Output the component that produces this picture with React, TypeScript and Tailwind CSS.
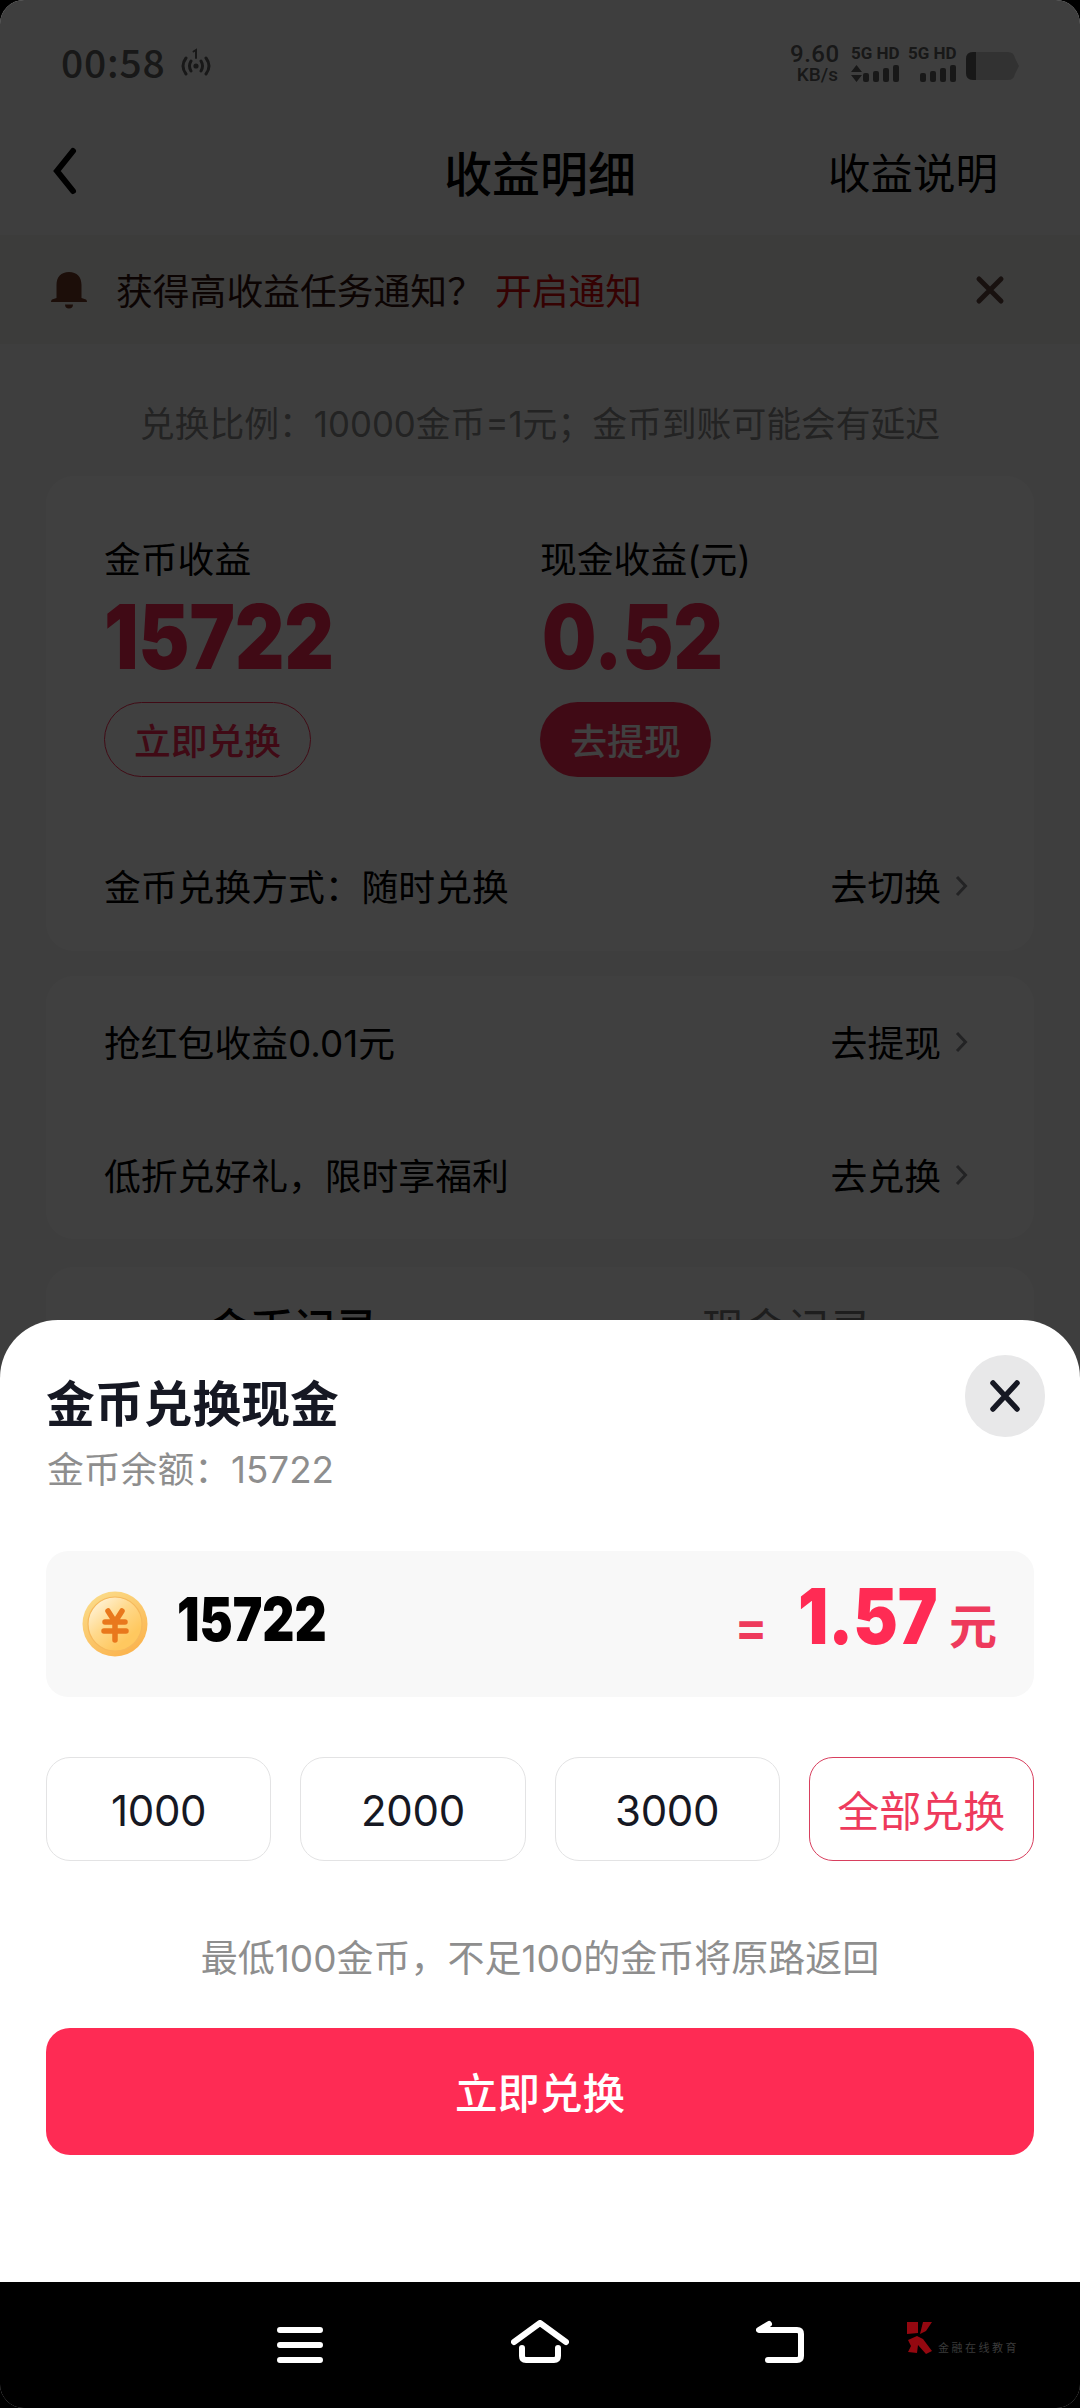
import type { ReactNode } from "react";

const records = [
  { label: <>抢红包收益<Num>0.01</Num>元</>, action: "去提现" },
  { label: <>低折兑好礼，限时享福利</>, action: "去兑换" },
];

const amounts = ["1000", "2000", "3000"];

function Num({ children }: { children: ReactNode }) {
  return <span className="font-[Inter]">{children}</span>;
}

function Signal() {
  return (
    <div className="flex items-end justify-end gap-[4px] h-[17px]">
      <div className="w-[6px] h-[9px] rounded-[2px] bg-[#606060]" />
      <div className="w-[6px] h-[11px] rounded-[2px] bg-[#606060]" />
      <div className="w-[6px] h-[14px] rounded-[2px] bg-[#606060]" />
      <div className="w-[6px] h-[17px] rounded-[2px] bg-[#606060]" />
    </div>
  );
}

function StatusBar() {
  return (
    <div className="flex h-[128px] pl-[61px] pr-[61px] text-[#606060]">
      <div className="pt-[40px] text-[39px] leading-[42px] font-medium tracking-[0.8px]">00:58</div>
      <svg className="mt-[47px] ml-[14px]" width="32" height="30" viewBox="0 0 32 30" fill="none" stroke="#606060" strokeWidth="3" strokeLinecap="round">
        <path d="M6 11q-6 8 0 16M11 14q-3 5 0 10M21 14q3 5 0 10M26 11q6 8 0 16" />
        <path d="M13.5 4.5L16 3v8" strokeWidth="2" />
        <circle cx="16" cy="19" r="2.6" fill="#606060" stroke="none" />
      </svg>
      <div className="ml-auto mt-[43px] w-[48px] text-right font-[Roboto] font-medium">
        <div className="text-[24px] leading-[23px] tracking-[0.5px]">9.60</div>
        <div className="text-[19px] leading-[17px]">KB/s</div>
      </div>
      <div className="mt-[45px] ml-[13px] w-[48px] font-[Roboto] text-[17px] leading-[16px] font-bold">
        <div className="whitespace-nowrap">5G HD</div>
        <div className="flex items-end mt-[4px] gap-[1px]">
          <svg width="11" height="17" viewBox="0 0 11 17" fill="#606060"><path d="M5.500 0L11 7H0zM5.500 17L0 10H11z" /></svg>
          <Signal />
        </div>
      </div>
      <div className="mt-[45px] ml-[9px] w-[48px] font-[Roboto] text-[17px] leading-[16px] font-bold">
        <div className="whitespace-nowrap">5G HD</div>
        <div className="mt-[4px]"><Signal /></div>
      </div>
      <svg className="mt-[52px] ml-[10px]" width="53" height="28" viewBox="0 0 53 28">
        <path d="M7 0H42Q48 0 49 6L53 14L49 22Q48 28 42 28H7Q0 28 0 21V7Q0 0 7 0" fill="#c8c8c8" />
        <path d="M10 0H7Q0 0 0 7V21Q0 28 7 28H10z" fill="#606060" />
      </svg>
    </div>
  );
}

function Chevron() {
  return (
    <svg className="ml-[14px]" width="13" height="20" viewBox="0 0 13 20" fill="none" stroke="#8a8b91" strokeWidth="3">
      <path d="M2 1L10.500 10L2 19" />
    </svg>
  );
}

function Row({ label, action }: { label: ReactNode; action: string }) {
  return (
    <div className="flex h-[37px] items-center justify-between leading-[37px]">
      <div className="h-[37px]">{label}</div>
      <div className="flex h-[37px] items-center">
        <span>{action}</span>
        <Chevron />
      </div>
    </div>
  );
}

function Page() {
  return (
    <div className="h-[2408px] bg-[#f8f8f8] text-[#000]">
      <div className="h-[235px]">
        <StatusBar />
        <div className="grid h-[86px] grid-cols-3 items-center px-[52px]">
          <svg width="26" height="50" viewBox="0 0 26 50" fill="none" stroke="#000" strokeWidth="6" strokeLinecap="round">
            <path d="M21 5L5 25L21 45" />
          </svg>
          <div className="text-center text-[48px] leading-none font-medium whitespace-nowrap">收益明细</div>
          <div className="pr-[30px] text-right text-[42.500px] leading-none whitespace-nowrap">收益说明</div>
        </div>
      </div>

      <div className="flex items-center h-[109px] bg-[#eeedec] pl-[50px] pr-[75px] text-[36.800px] leading-none">
        <svg width="38" height="38" viewBox="0 0 38 38" fill="#703a25">
          <path d="M19 1C11 1 6.500 6 6.500 14V27L2 28.500Q1 29 1 31H37Q37 29 36 28.500L31.500 27V14C31.500 6 27 1 19 1zM15 33.500H23Q23 37.500 19 37.500Q15 37.500 15 33.500" />
        </svg>
        <span className="ml-[28px] text-[#33130c]">获得高收益任务通知？</span>
        <span className="ml-[11px] text-[#d40808]">开启通知</span>
        <svg className="ml-auto" width="30" height="30" viewBox="0 0 30 30" stroke="#60463e" strokeWidth="5" strokeLinecap="round">
          <path d="M4 4L26 26M26 4L4 26" />
        </svg>
      </div>

      <div className="flex justify-center h-[132px] pt-[60px] text-[34.800px] leading-[37px] text-[#8a8a8a] whitespace-nowrap">
        <span className="h-[37px]">兑换比例：<Num>10000</Num>金币<Num>=1</Num>元；金币到账可能会有延迟</span>
      </div>

      <div className="mx-[46px] h-[475px] rounded-[28px] bg-white px-[58px] pt-[63px] text-[36.800px] leading-none">
        <div className="grid grid-cols-2">
          <div className="flex flex-col items-start">
            <div className="h-[37px]">金币收益</div>
            <div className="mt-[16px] h-[88px] origin-left scale-x-[0.85] font-[Inter] text-[90px] leading-[90px] font-black text-[#ff2b54]">15722</div>
            <div className="mt-[22px] flex items-center justify-center w-[207px] h-[75px] rounded-full border border-[#ff2b54] text-[#ff2b54] font-medium">立即兑换</div>
          </div>
          <div className="flex flex-col items-start">
            <div className="h-[37px]">现金收益<Num>(</Num>元<Num>)</Num></div>
            <div className="mt-[16px] ml-[2px] h-[88px] origin-left scale-x-[0.85] font-[Inter] text-[90px] leading-[90px] font-black text-[#ff2b54]">0.52</div>
            <div className="mt-[22px] flex items-center justify-center w-[171px] h-[75px] rounded-full bg-[#ff2b54] text-white font-medium">去提现</div>
          </div>
        </div>
        <div className="mt-[90px] pr-[8px]">
          <Row label="金币兑换方式：随时兑换" action="去切换" />
        </div>
      </div>

      <div className="mx-[46px] mt-[25px] flex h-[263px] flex-col gap-[96px] rounded-[28px] bg-white pl-[58px] pr-[66px] pt-[47px] text-[36.800px] leading-none">
        {records.map((item) => (
          <Row key={item.action} label={item.label} action={item.action} />
        ))}
      </div>

      <div className="mx-[46px] mt-[28px] grid h-[300px] grid-cols-2 rounded-t-[28px] bg-white pt-[38px] text-center text-[42.500px] leading-none">
        <div className="font-medium">金币记录</div>
        <div className="text-[#777]">现金记录</div>
      </div>
    </div>
  );
}

function Coin() {
  return (
    <svg width="66" height="66" viewBox="0 0 66 66">
      <defs>
        <linearGradient id="rim" x1="0" y1="0" x2="0.600" y2="1">
          <stop offset="0" stopColor="#fbe08f" />
          <stop offset="1" stopColor="#fbb550" />
        </linearGradient>
        <linearGradient id="face" x1="0.100" y1="0.100" x2="0.700" y2="0.800">
          <stop offset="0" stopColor="#fff3d8" />
          <stop offset="0.500" stopColor="#ffd98c" />
          <stop offset="1" stopColor="#ffc85f" />
        </linearGradient>
      </defs>
      <circle cx="33" cy="33" r="32.500" fill="url(#rim)" />
      <circle cx="33" cy="33" r="27" fill="url(#face)" stroke="#f6b95c" strokeWidth="1.200" />
      <path d="M26 20L33 31L40 20M23 31H43M22 40H44M33 31V49" fill="none" stroke="#e9781c" strokeWidth="5.500" strokeLinecap="round" />
    </svg>
  );
}

function ExchangeSheet() {
  return (
    <div className="absolute left-0 top-[1320px] w-full h-[962px] rounded-t-[58px] bg-white px-[46px] text-[#161823]">
      <div className="flex h-[168px] justify-between pt-[35px] -mr-[11px]">
        <div className="pt-[21px]">
          <div className="text-[48.800px] leading-[50px] font-bold">金币兑换现金</div>
          <div className="mt-[23px] ml-px text-[36.800px] leading-[37px] text-[#8e8e8e]">金币余额：<Num>15722</Num></div>
        </div>
        <div className="flex h-[82px] w-[80px] items-center justify-center rounded-full bg-[#e8e8e9]">
          <svg width="32" height="34" viewBox="0 0 32 34" stroke="#161823" strokeWidth="5.500" strokeLinecap="round">
            <path d="M4 4L28 30M28 4L4 30" />
          </svg>
        </div>
      </div>

      <div className="mt-[63px] flex h-[146px] items-center rounded-[22px] bg-[#f8f8f8] pl-[36px] pr-[37px]">
        <Coin />
        <div className="ml-[29px] mb-[10px] origin-left scale-x-[0.83] font-[Inter] text-[60px] leading-none font-black text-black">15722</div>
        <div className="ml-auto mb-[16px] flex items-baseline text-[#ee3a5c] font-bold leading-none">
          <span className="mr-[10px] font-[Inter] text-[48px]">=</span>
          <span className="origin-right scale-x-[0.87] font-[Inter] text-[77px] font-black text-[#ff2b54]">1.57</span>
          <span className="ml-[11px] text-[48px]">元</span>
        </div>
      </div>

      <div className="mt-[60px] grid grid-cols-4 gap-[29px] text-[42px] leading-none">
        {amounts.map((amount) => (
          <div key={amount} className="flex h-[104px] items-center justify-center rounded-[24px] border border-[#e3e3e4] pt-[3px] tracking-[-0.3px]">
            <Num>{amount}</Num>
          </div>
        ))}
        <div className="flex h-[104px] items-center justify-center rounded-[24px] border border-[#d8405f] text-[#ee3a5c]">全部兑换</div>
      </div>

      <div className="mt-[77px] h-[37px] text-center text-[37px] leading-[37px] text-[#8e8e8e] whitespace-nowrap">
        最低<Num>100</Num>金币，不足<Num>100</Num>的金币将原路返回
      </div>

      <div className="mt-[53px] flex h-[127px] items-center justify-center rounded-[24px] bg-[#fe2b54] text-[42.500px] leading-none font-medium text-white">
        立即兑换
      </div>
    </div>
  );
}

function NavBar() {
  return (
    <div className="absolute bottom-0 left-0 flex h-[126px] w-full items-start bg-black pl-[277px] pt-[38px]">
      <svg className="mt-[7px]" width="46" height="36" viewBox="0 0 46 36" stroke="#fff" strokeWidth="6" strokeLinecap="round">
        <path d="M3 3H43M3 18H43M3 33H43" />
      </svg>
      <svg className="ml-[188px]" width="58" height="44" viewBox="0 0 58 44" fill="none" stroke="#fff" strokeWidth="6" strokeLinecap="round" strokeLinejoin="round">
        <path d="M3 22L29 3L55 22M11 28V36Q11 40 15 40H43Q47 40 47 36V28" />
      </svg>
      <svg className="ml-[187px]" width="49" height="44" viewBox="0 0 49 44" fill="none" stroke="#fff" strokeWidth="6" strokeLinecap="round" strokeLinejoin="round">
        <path d="M13 4L3 10H41Q45 10 45 14V36Q45 40 41 40H12" />
      </svg>
      <svg className="ml-[101px] mt-[2px]" width="28" height="34" viewBox="0 0 28 34" fill="#940810">
        <path d="M1 0H12V11L1 12zM17 0H26L20 9L14 12zM2 18L11 14L17 17L26 29L20 32L12 23L11 31L2 30L5 24z" />
      </svg>
      <div className="ml-[4px] mt-[20px] whitespace-nowrap text-[11px] leading-[14px] tracking-[2.500px] text-[#3b3b3b]">金融在线教育</div>
    </div>
  );
}

export default function App() {
  return (
    <div className="bg-black w-[1080px] h-[2408px]">
      <div className="relative h-[2408px] overflow-hidden rounded-[24px] font-['Noto_Sans_CJK_SC',sans-serif]">
        <Page />
        <div className="absolute inset-0 bg-black/75" />
        <ExchangeSheet />
        <NavBar />
      </div>
    </div>
  );
}
